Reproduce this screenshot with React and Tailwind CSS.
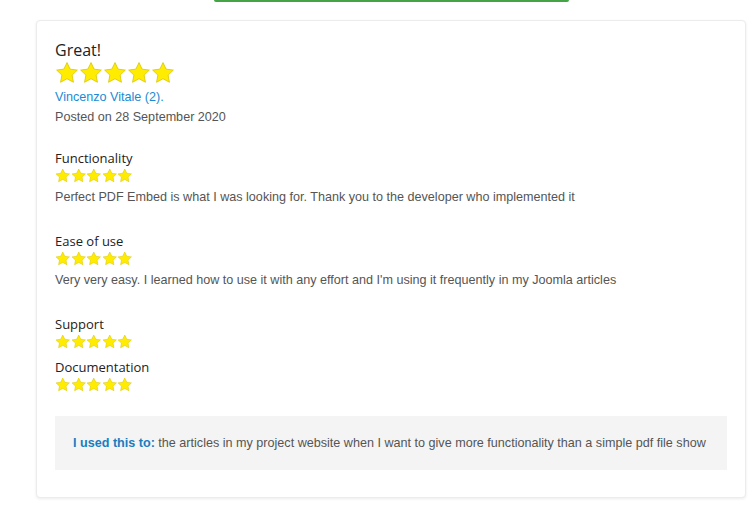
const Star = ({ size }) => (
  <svg width={size} height={size} viewBox="0 0 24 24" className="block">
    <path
      d="M12 1.6l3.15 6.55 7.2.95-5.25 5 1.35 7.15L12 17.75 5.55 21.25 6.9 14.1l-5.25-5 7.2-.95z"
      fill="#ffec00"
      stroke="#d8c500"
      strokeWidth="0.8"
      strokeLinejoin="round"
    />
  </svg>
);

const Stars = ({ size, className }) => (
  <div className={`flex items-center ${className}`}>
    {[0, 1, 2, 3, 4].map((i) => (
      <Star key={i} size={size} />
    ))}
  </div>
);

const Section = ({ title, text, className = '' }) => (
  <div className={className}>
    <h4 className="font-['Open_Sans',sans-serif] text-[13px] leading-[18px] text-[#222]">{title}</h4>
    <Stars size={15.5} className="h-[18px]" />
    {text && <p className="mt-[2px] text-[12.6px] leading-[20px] text-[#555]">{text}</p>}
  </div>
);

export default function App() {
  return (
    <div className="min-h-[506px] bg-white font-['Liberation_Sans',Arial,sans-serif]">
      <div className="ml-[36px] w-[710px]">
        {/* ── green button edge ── */}
        <div className="mx-auto h-[2px] w-[355px] rounded-b-[2px] bg-[#45a546]" />

        {/* ── review card ── */}
        <div className="mt-[18px] rounded-[4px] border border-[#ececec] bg-white px-[18px] pt-[18px] pb-[27px] shadow-[0_1px_3px_rgba(0,0,0,0.08)]">
          <h3 className="font-['Open_Sans',sans-serif] text-[16px] leading-[22px] text-[#222]">Great!</h3>
          <Stars size={24} className="h-[24px]" />
          <a href="#" className="mt-[3px] block text-[12.6px] leading-[19px] text-[#1a8ad6]">
            Vincenzo Vitale (2).
          </a>
          <p className="text-[12.6px] leading-[20px] text-[#555]">Posted on 28 September 2020</p>

          <Section
            className="mt-[22px]"
            title="Functionality"
            text="Perfect PDF Embed is what I was looking for. Thank you to the developer who implemented it"
          />
          <Section
            className="mt-[25px]"
            title="Ease of use"
            text="Very very easy. I learned how to use it with any effort and I'm using it frequently in my Joomla articles"
          />
          <Section className="mt-[25px]" title="Support" />
          <Section className="mt-[7px]" title="Documentation" />

          <div className="mt-[22px] flex h-[54px] items-center bg-[#f4f4f4] px-[18px] text-[12.6px] text-[#555]">
            <p>
              <span className="font-bold text-[#1a7dbf]">I used this to:</span> the articles in my project website
              when I want to give more functionality than a simple pdf file show
            </p>
          </div>
        </div>
      </div>
    </div>
  );
}
